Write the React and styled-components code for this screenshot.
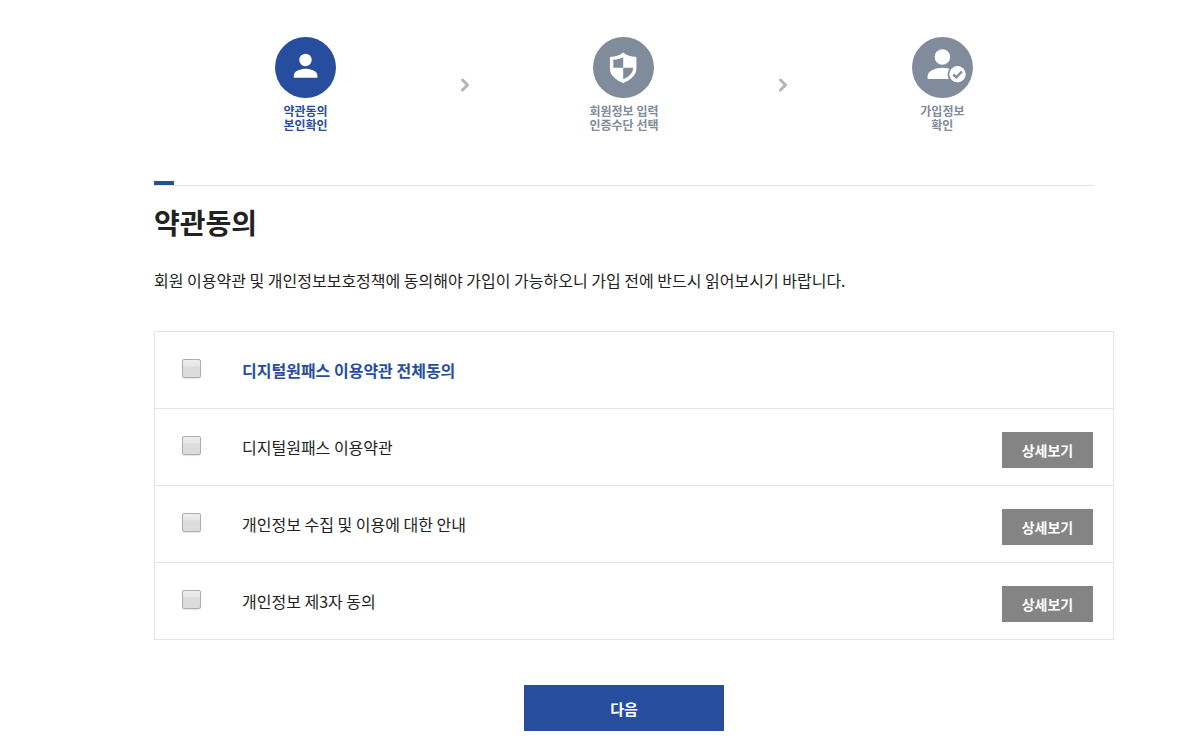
import React, { useState } from 'react';
import styled, { createGlobalStyle } from 'styled-components';

const GlobalStyle = createGlobalStyle`
  * {
    box-sizing: border-box;
  }

  body {
    margin: 0;
    background-color: #fff;
    color: #222;
    font-family: "Noto Sans CJK KR", "Noto Sans", sans-serif;
    font-size: 16px;
  }
`;

const Page = styled.main`
  padding: 37px 80px 20px 154px;

  @media (max-width: 768px) {
    padding: 24px 20px;
  }
`;

const Section = styled.section`
  margin-right: 20px;
`;

const Steps = styled.ol`
  display: grid;
  grid-template-columns: repeat(5, 1fr);
  align-items: center;
  justify-items: center;
  list-style: none;
  margin: 0;
  padding: 0 72px;

  @media (max-width: 768px) {
    padding: 0;
  }
`;

const Step = styled.li`
  display: flex;
  flex-direction: column;
  align-items: center;
  gap: 6px;
  color: ${({ $active }) => ($active ? '#274e9e' : '#808b9b')};
`;

const StepIcon = styled.svg`
  display: block;
  width: 61px;
  height: 61px;
`;

const StepLabel = styled.span`
  font-size: 12px;
  font-weight: 700;
  line-height: 14px;
  text-align: center;
  white-space: pre-line;
`;

const Arrow = styled.li`
  display: flex;
  color: #b5b5b5;
`;

const TitleBlock = styled.div`
  margin-top: 49px;
  border-bottom: 1px solid #e5e5e5;

  &::before {
    content: "";
    display: block;
    width: 20px;
    height: 4px;
    background-color: #274e9e;
  }
`;

const Title = styled.h1`
  margin: 16px 0 0;
  font-size: 28px;
  font-weight: 700;
  line-height: 40px;
`;

const Description = styled.p`
  margin: 26px 0 0;
  line-height: 24px;
`;

const TermsList = styled.ul`
  list-style: none;
  margin: 39px 0 0;
  padding: 0;
  border: 1px solid #e5e5e5;
`;

const TermsRow = styled.li`
  display: flex;
  align-items: flex-start;
  min-height: 76px;
  padding: 23px 20px 17px 27px;

  & + & {
    min-height: 77px;
    border-top: 1px solid #e5e5e5;
  }
`;

const Checkbox = styled.input`
  appearance: none;
  flex: none;
  width: 19px;
  height: 19px;
  margin: 4px 0 0;
  border: 1px solid #adadad;
  border-radius: 2px;
  background: linear-gradient(#eee 0%, #e6e6e6 35%, #dcdcdc 40%, #dcdcdc 100%);
  box-shadow: 0 1px 1px rgba(0, 0, 0, 0.1);

  &:checked {
    border-color: #274e9e;
    background: #274e9e;
  }
`;

const TermsLabel = styled.label`
  flex: 1;
  padding-left: 41px;
  line-height: 30px;
  color: ${({ $primary }) => ($primary ? '#274e9e' : 'inherit')};
  font-weight: ${({ $primary }) => ($primary ? 700 : 400)};
`;

const DetailButton = styled.button`
  flex: none;
  width: 91px;
  height: 36px;
  padding: 0;
  border: 0;
  background-color: #848484;
  color: #fff;
  font-family: inherit;
  font-size: 14px;
  font-weight: 700;
  cursor: pointer;
`;

const Actions = styled.div`
  display: flex;
  justify-content: center;
  margin: 45px 20px 0 0;
`;

const NextButton = styled.button`
  width: 200px;
  height: 46px;
  padding: 0;
  border: 0;
  background-color: #274e9e;
  color: #fff;
  font-family: inherit;
  font-size: 15px;
  font-weight: 700;
  cursor: pointer;
`;

const UserIcon = () => (
  <StepIcon viewBox="0 0 61 61" aria-hidden="true">
    <circle cx="30.5" cy="30.5" r="30.5" fill="currentColor" />
    <circle cx="30.5" cy="23" r="6.2" fill="#fff" />
    <path d="M18.8 40.8v-2.6c0-4 7-6.4 11.8-6.4s11.8 2.4 11.8 6.4v2.6z" fill="#fff" />
  </StepIcon>
);

const ShieldIcon = () => (
  <StepIcon viewBox="0 0 61 61" aria-hidden="true">
    <circle cx="30.5" cy="30.5" r="30.5" fill="currentColor" />
    <path
      d="M30.2 15.4c3.6 2.9 8 4.2 12 4.4q1.200 0 1.200 1.200v10.600c0 6.600-5.600 11.500-13.200 14.600-7.600-3.100-13.300-8-13.300-14.600V21q0-1.200 1.200-1.200c4-.2 8.500-1.500 12.100-4.400z"
      fill="#fff"
    />
    <path d="M30.2 20.2v10.600H20.300v-8c3.700-.3 7.100-1.100 9.900-2.600z" fill="currentColor" />
    <path d="M30.2 30.8h10c0 5-3.900 8.700-10 11.500z" fill="currentColor" />
  </StepIcon>
);

const UserCheckIcon = () => (
  <StepIcon viewBox="0 0 61 61" aria-hidden="true">
    <circle cx="30.5" cy="30.5" r="30.5" fill="currentColor" />
    <circle cx="30.4" cy="20" r="7.8" fill="#fff" />
    <path d="M15.6 42v-3c0-5 8-8.2 14.8-8.2 3.600 0 7.200.8 10 2.200V42z" fill="#fff" />
    <circle cx="45.5" cy="37.2" r="9.9" fill="currentColor" />
    <circle cx="45.5" cy="37.2" r="8.2" fill="#fff" />
    <path d="M41.3 37.300l3 3 5.600-5.800" fill="none" stroke="currentColor" strokeWidth="2.4" />
  </StepIcon>
);

const StepArrow = () => (
  <Arrow aria-hidden="true">
    <svg width="10" height="14" viewBox="0 0 10 14">
      <path
        d="M2.500 2L7.500 7l-5 5"
        fill="none"
        stroke="currentColor"
        strokeWidth="3"
        strokeLinecap="round"
        strokeLinejoin="round"
      />
    </svg>
  </Arrow>
);

const steps = [
  { icon: UserIcon, label: '약관동의\n본인확인', active: true },
  { icon: ShieldIcon, label: '회원정보 입력\n인증수단 선택', active: false },
  { icon: UserCheckIcon, label: '가입정보\n확인', active: false },
];

const terms = [
  { id: 'service', label: '디지털원패스 이용약관' },
  { id: 'privacy', label: '개인정보 수집 및 이용에 대한 안내' },
  { id: 'thirdParty', label: '개인정보 제3자 동의' },
];

const App = () => {
  const [agreed, setAgreed] = useState([]);
  const allAgreed = agreed.length === terms.length;

  const toggleAll = () => setAgreed(allAgreed ? [] : terms.map((term) => term.id));

  const toggle = (id) =>
    setAgreed((prev) => (prev.includes(id) ? prev.filter((item) => item !== id) : [...prev, id]));

  return (
    <>
      <GlobalStyle />
      <Page>
        <Section>
          <Steps>
            {steps.map(({ icon: Icon, label, active }, index) => (
              <React.Fragment key={label}>
                {index > 0 && <StepArrow />}
                <Step $active={active} aria-current={active ? 'step' : undefined}>
                  <Icon />
                  <StepLabel>{label}</StepLabel>
                </Step>
              </React.Fragment>
            ))}
          </Steps>
          <TitleBlock />
          <Title>약관동의</Title>
          <Description>
            회원 이용약관 및 개인정보보호정책에 동의해야 가입이 가능하오니 가입 전에 반드시 읽어보시기 바랍니다.
          </Description>
        </Section>

        <TermsList>
          <TermsRow>
            <Checkbox type="checkbox" id="all" checked={allAgreed} onChange={toggleAll} />
            <TermsLabel htmlFor="all" $primary>디지털원패스 이용약관 전체동의</TermsLabel>
          </TermsRow>
          {terms.map((term) => (
            <TermsRow key={term.id}>
              <Checkbox
                type="checkbox"
                id={term.id}
                checked={agreed.includes(term.id)}
                onChange={() => toggle(term.id)}
              />
              <TermsLabel htmlFor={term.id}>{term.label}</TermsLabel>
              <DetailButton type="button">상세보기</DetailButton>
            </TermsRow>
          ))}
        </TermsList>

        <Actions>
          <NextButton type="button">다음</NextButton>
        </Actions>
      </Page>
    </>
  );
};

export default App;
